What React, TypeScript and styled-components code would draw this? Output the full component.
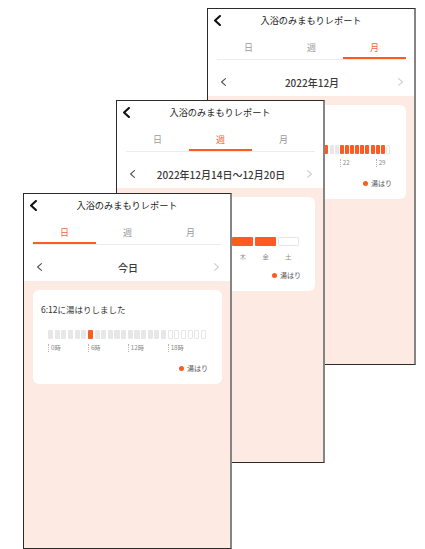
import * as React from "react";
import styled, { createGlobalStyle } from "styled-components";

const ORANGE = "#ff5a1f";
const PINK = "#fdebe3";
const BAR_GRAY = "#e7e7e7";

type Period = "day" | "week" | "month";
type BarState = "on" | "off" | "future";

interface AxisLabel {
  at: number;
  text: string;
}

interface Report {
  period: Period;
  left: number;
  top: number;
  height: number;
  range: string;
  summary: string;
  bars: BarState[];
  labels: AxisLabel[];
  ticked: boolean;
}

const tabs: { key: Period; label: string }[] = [
  { key: "day", label: "日" },
  { key: "week", label: "週" },
  { key: "month", label: "月" },
];

const dayBars: BarState[] = Array.from({ length: 24 }, (_, h) =>
  h === 6 ? "on" : h < 18 ? "off" : "future"
);

const weekBars: BarState[] = ["on", "off", "on", "on", "on", "on", "future"];

const monthBars: BarState[] = Array.from({ length: 31 }, (_, d) => {
  if (d === 30) return "future";
  if (d >= 21) return "on";
  return d % 3 === 0 ? "on" : "off";
});

const reports: Report[] = [
  {
    period: "month",
    left: 207,
    top: 8,
    height: 357,
    range: "2022年12月",
    summary: "18回湯はりしました",
    bars: monthBars,
    labels: [
      { at: 0, text: "1" },
      { at: 7, text: "8" },
      { at: 14, text: "15" },
      { at: 21, text: "22" },
      { at: 28, text: "29" },
    ],
    ticked: true,
  },
  {
    period: "week",
    left: 116,
    top: 100,
    height: 363,
    range: "2022年12月14日〜12月20日",
    summary: "5回湯はりしました",
    bars: weekBars,
    labels: ["日", "月", "火", "水", "木", "金", "土"].map((text, at) => ({ at, text })),
    ticked: false,
  },
  {
    period: "day",
    left: 23,
    top: 193,
    height: 356,
    range: "今日",
    summary: "6:12に湯はりしました",
    bars: dayBars,
    labels: [
      { at: 0, text: "0時" },
      { at: 6, text: "6時" },
      { at: 12, text: "12時" },
      { at: 18, text: "18時" },
    ],
    ticked: true,
  },
];

const GlobalStyle = createGlobalStyle`
  html, body {
    margin: 0;
    padding: 0;
    background: #ffffff;
  }
  body {
    font-family: "Noto Sans CJK JP", "Noto Sans", sans-serif;
    color: #333;
  }
`;

const Desktop = styled.div`
  position: relative;
  width: 425px;
  height: 549px;
  overflow: hidden;
  background: #ffffff;
`;

const Screen = styled.div<{ $left: number; $top: number; $height: number }>`
  position: absolute;
  left: ${p => p.$left}px;
  top: ${p => p.$top}px;
  width: 209px;
  height: ${p => p.$height}px;
  box-sizing: border-box;
  display: flex;
  flex-direction: column;
  background: #ffffff;
  border: 1px solid #2b2b2b;
  border-right: 2px solid #858585;
  overflow: hidden;
`;

const Header = styled.div`
  display: grid;
  grid-template-columns: 24px 1fr 24px;
  align-items: center;
  height: 22px;
`;

const BackButton = styled.div`
  display: flex;
  align-items: center;
  padding-left: 6px;
  height: 100%;
`;

const Title = styled.div`
  text-align: center;
  font-size: 9.2px;
  line-height: 12px;
  color: #222;
  white-space: nowrap;
`;

const TabRow = styled.div`
  display: grid;
  grid-template-columns: repeat(3, 1fr);
  margin: 6px 8px 0 9px;
  border-bottom: 1px solid #ececec;
`;

const Tab = styled.div<{ $active: boolean }>`
  display: flex;
  align-items: center;
  justify-content: center;
  height: 20px;
  font-size: 9px;
  color: ${p => (p.$active ? "#f0653a" : "#9a9a9a")};
  border-bottom: 2px solid ${p => (p.$active ? ORANGE : "transparent")};
`;

const DateNav = styled.div`
  display: flex;
  align-items: center;
  justify-content: space-between;
  height: 28px;
  padding: 8px 11px 0 13px;
`;

const RangeText = styled.div`
  font-size: 10px;
  font-weight: 500;
  color: #3a3a3a;
  white-space: nowrap;
`;

const Body = styled.div`
  flex: 1;
  background: ${PINK};
  padding: 9px 8px 0 9px;
`;

const Card = styled.div`
  height: 94px;
  box-sizing: border-box;
  background: #ffffff;
  border-radius: 6px;
  padding: 13px 16px 0 8px;
  display: flex;
  flex-direction: column;
`;

const Summary = styled.div`
  font-size: 8.5px;
  line-height: 12px;
  color: #333;
  white-space: nowrap;
`;

const Chart = styled.div`
  margin: 15px 0 0 7px;
  width: 158px;
`;

const BarRow = styled.div<{ $count: number; $gap: number }>`
  display: grid;
  grid-template-columns: repeat(${p => p.$count}, 1fr);
  column-gap: ${p => p.$gap}px;
  height: 9px;
`;

const Bar = styled.div<{ $state: BarState }>`
  box-sizing: border-box;
  border-radius: 1px;
  background: ${p =>
    p.$state === "on" ? ORANGE : p.$state === "off" ? BAR_GRAY : "#ffffff"};
  border: ${p => (p.$state === "future" ? `1px solid ${BAR_GRAY}` : "none")};
`;

const LabelRow = styled.div<{ $count: number; $gap: number; $ticked: boolean }>`
  display: grid;
  grid-template-columns: repeat(${p => p.$count}, 1fr);
  column-gap: ${p => p.$gap}px;
  margin-top: ${p => (p.$ticked ? 5 : 7)}px;
  height: 8px;
`;

const AxisText = styled.div<{ $col: number; $ticked: boolean }>`
  grid-column: ${p => (p.$ticked ? `${p.$col} / span 3` : `${p.$col}`)};
  grid-row: 1;
  font-size: 6.2px;
  line-height: 8px;
  color: #8a8a8a;
  white-space: nowrap;
  text-align: ${p => (p.$ticked ? "left" : "center")};
  padding-left: ${p => (p.$ticked ? "2px" : "0")};
  border-left: ${p => (p.$ticked ? "1px dotted #b5b5b5" : "none")};
`;

const Legend = styled.div`
  display: flex;
  align-items: center;
  justify-content: flex-end;
  gap: 3px;
  margin-top: auto;
  margin-right: -2px;
  height: 24px;
  padding-bottom: 8px;
  box-sizing: border-box;
  font-size: 7px;
  color: #555;
`;

const Dot = styled.span`
  width: 5px;
  height: 5px;
  border-radius: 50%;
  background: ${ORANGE};
`;

const Chevron: React.FC<{ dir: "left" | "right"; color: string; w: number; h: number; stroke: number }> = ({
  dir,
  color,
  w,
  h,
  stroke,
}) => (
  <svg width={w} height={h} viewBox={`0 0 ${w} ${h}`}>
    <polyline
      points={
        dir === "left"
          ? `${w - stroke / 2},${stroke / 2} ${stroke / 2},${h / 2} ${w - stroke / 2},${h - stroke / 2}`
          : `${stroke / 2},${stroke / 2} ${w - stroke / 2},${h / 2} ${stroke / 2},${h - stroke / 2}`
      }
      fill="none"
      stroke={color}
      strokeWidth={stroke}
      strokeLinecap="round"
      strokeLinejoin="round"
    />
  </svg>
);

const gapFor = (count: number) => (count <= 24 ? 1.6 : 1.1);

const ReportScreen: React.FC<{ report: Report }> = ({ report }) => {
  const count = report.bars.length;
  const gap = gapFor(count);
  return (
    <Screen $left={report.left} $top={report.top} $height={report.height}>
      <Header>
        <BackButton>
          <Chevron dir="left" color="#111" w={7} h={11} stroke={2.1} />
        </BackButton>
        <Title>入浴のみまもりレポート</Title>
        <span />
      </Header>
      <TabRow>
        {tabs.map(t => (
          <Tab key={t.key} $active={t.key === report.period}>
            {t.label}
          </Tab>
        ))}
      </TabRow>
      <DateNav>
        <Chevron dir="left" color="#555" w={5} h={8} stroke={1.1} />
        <RangeText>{report.range}</RangeText>
        <Chevron dir="right" color="#cfcfcf" w={5} h={8} stroke={1.1} />
      </DateNav>
      <Body>
        <Card>
          <Summary>{report.summary}</Summary>
          <Chart>
            <BarRow $count={count} $gap={gap}>
              {report.bars.map((s, i) => (
                <Bar key={i} $state={s} />
              ))}
            </BarRow>
            <LabelRow $count={count} $gap={gap} $ticked={report.ticked}>
              {report.labels.map(l => (
                <AxisText key={l.text} $col={l.at + 1} $ticked={report.ticked}>
                  {l.text}
                </AxisText>
              ))}
            </LabelRow>
          </Chart>
          <Legend>
            <Dot />
            湯はり
          </Legend>
        </Card>
      </Body>
    </Screen>
  );
};

const App: React.FC = () => (
  <>
    <GlobalStyle />
    <Desktop>
      {reports.map(r => (
        <ReportScreen key={r.period} report={r} />
      ))}
    </Desktop>
  </>
);

export default App;
